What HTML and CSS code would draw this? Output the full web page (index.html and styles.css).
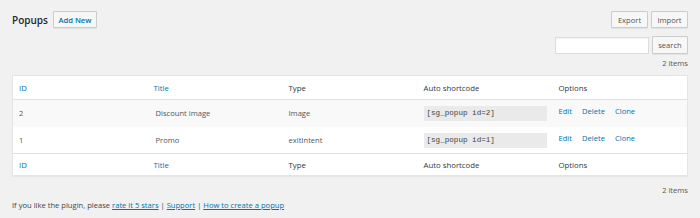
FILE: index.html
```html
<!DOCTYPE html>
<html>
<head>
<meta charset="utf-8">
<link rel="stylesheet" href="styles.css">
</head>
<body>
<div class="wrap">
  <div class="top">
    <div class="title-group">
      <h1 class="page-title">Popups</h1>
      <a class="btn btn-add">Add New</a>
    </div>
    <div class="actions">
      <a class="btn">Export</a>
      <a class="btn">Import</a>
    </div>
  </div>
  <div class="search-row">
    <input class="search-input" type="text">
    <a class="btn btn-search">search</a>
  </div>
  <div class="count count-top">2 items</div>
  <table class="list">
    <thead>
      <tr>
        <th class="link">ID</th>
        <th class="link">Title</th>
        <th>Type</th>
        <th>Auto shortcode</th>
        <th>Options</th>
      </tr>
    </thead>
    <tbody>
      <tr class="alt">
        <td>2</td>
        <td class="name">Discount image</td>
        <td>Image</td>
        <td><span class="code">[sg_popup id=2]</span></td>
        <td class="opts"><a>Edit</a><a>Delete</a><a>Clone</a></td>
      </tr>
      <tr>
        <td>1</td>
        <td class="name">Promo</td>
        <td>exitIntent</td>
        <td><span class="code">[sg_popup id=1]</span></td>
        <td class="opts"><a>Edit</a><a>Delete</a><a>Clone</a></td>
      </tr>
    </tbody>
    <tfoot>
      <tr>
        <th class="link">ID</th>
        <th class="link">Title</th>
        <th>Type</th>
        <th>Auto shortcode</th>
        <th>Options</th>
      </tr>
    </tfoot>
  </table>
  <div class="count count-bottom">2 items</div>
  <p class="note">If you like the plugin, please <a>rate it 5 stars</a> | <a>Support</a> | <a>How to create a popup</a></p>
</div>
</body>
</html>
```
FILE: styles.css
```css
html, body {
  margin: 0;
  padding: 0;
  background: #f1f1f1;
}
body {
  font-family: "Open Sans", "Liberation Sans", sans-serif;
  font-size: 7.8px;
  color: #444;
}
.wrap {
  padding: 11px 12px 0 12px;
}
.top {
  display: flex;
  justify-content: space-between;
  align-items: center;
  height: 17px;
}
.title-group {
  display: flex;
  align-items: center;
  gap: 5px;
}
.page-title {
  margin: 0;
  font-size: 10px;
  font-weight: 600;
  color: #23282d;
}
.actions {
  display: flex;
  gap: 3px;
}
.btn {
  display: inline-flex;
  align-items: center;
  justify-content: center;
  box-sizing: border-box;
  height: 17px;
  padding: 0 4px;
  border: 1px solid #cccccc;
  background: #f7f7f7;
  color: #555;
  border-radius: 1px;
  font-size: 7.6px;
  white-space: nowrap;
  box-shadow: 0 1px 0 #e2e2e2;
}
.btn-add {
  color: #0073aa;
  font-weight: 600;
  background: #f7f7f7;
  width: 44px;
}
.actions .btn { width: 37px; }
.search-row {
  display: flex;
  justify-content: flex-end;
  align-items: center;
  gap: 3px;
  margin-top: 8px;
  height: 18px;
}
.search-input {
  box-sizing: border-box;
  width: 94px;
  height: 17px;
  margin: 0;
  border: 1px solid #dddddd;
  background: #fff;
  box-shadow: inset 0 1px 1px rgba(0,0,0,0.05);
}
.btn-search { width: 36px; height: 18px; }
.count {
  text-align: right;
  color: #555;
  font-size: 7.6px;
  line-height: 10px;
}
.count-top { margin-top: 4px; }
.list {
  width: 100%;
  table-layout: fixed;
  border-collapse: collapse;
  background: #fff;
  border: 1px solid #e5e5e5;
  margin-top: 7px;
  box-shadow: 0 1px 1px rgba(0,0,0,0.04);
}
.list thead tr { height: 24px; }
.list tbody tr { height: 27px; }
.list tfoot tr { height: 22px; }
.list th {
  text-align: left;
  font-weight: 400;
  color: #32373c;
  font-size: 7.8px;
  padding: 0 6px;
}
.list thead th { border-bottom: 1px solid #e1e1e1; }
.list tfoot th { border-top: 1px solid #e1e1e1; }
.list th.link { color: #0073aa; }
.list td {
  padding: 0 6px;
  color: #555;
  font-size: 7.6px;
  vertical-align: middle;
}
.list tr.alt td { background: #f9f9f9; }
.list td.name { padding-left: 8px; }
.code {
  display: block;
  box-sizing: border-box;
  width: 123px;
  height: 15px;
  line-height: 15px;
  padding: 0 3px;
  background: #eaeaea;
  font-family: "Liberation Mono", "DejaVu Sans Mono", monospace;
  font-size: 7.6px;
  color: #444;
  margin-top: 1px;
}
.list td.opts { padding-bottom: 4px; }
.opts a {
  color: #0073aa;
  margin-right: 10px;
}
.count-bottom { margin-top: 9px; }
.note {
  margin: 5px 0 0 0;
  font-size: 7.6px;
  line-height: 10px;
  color: #444;
}
.note a {
  color: #0073aa;
  text-decoration: underline;
}
```
